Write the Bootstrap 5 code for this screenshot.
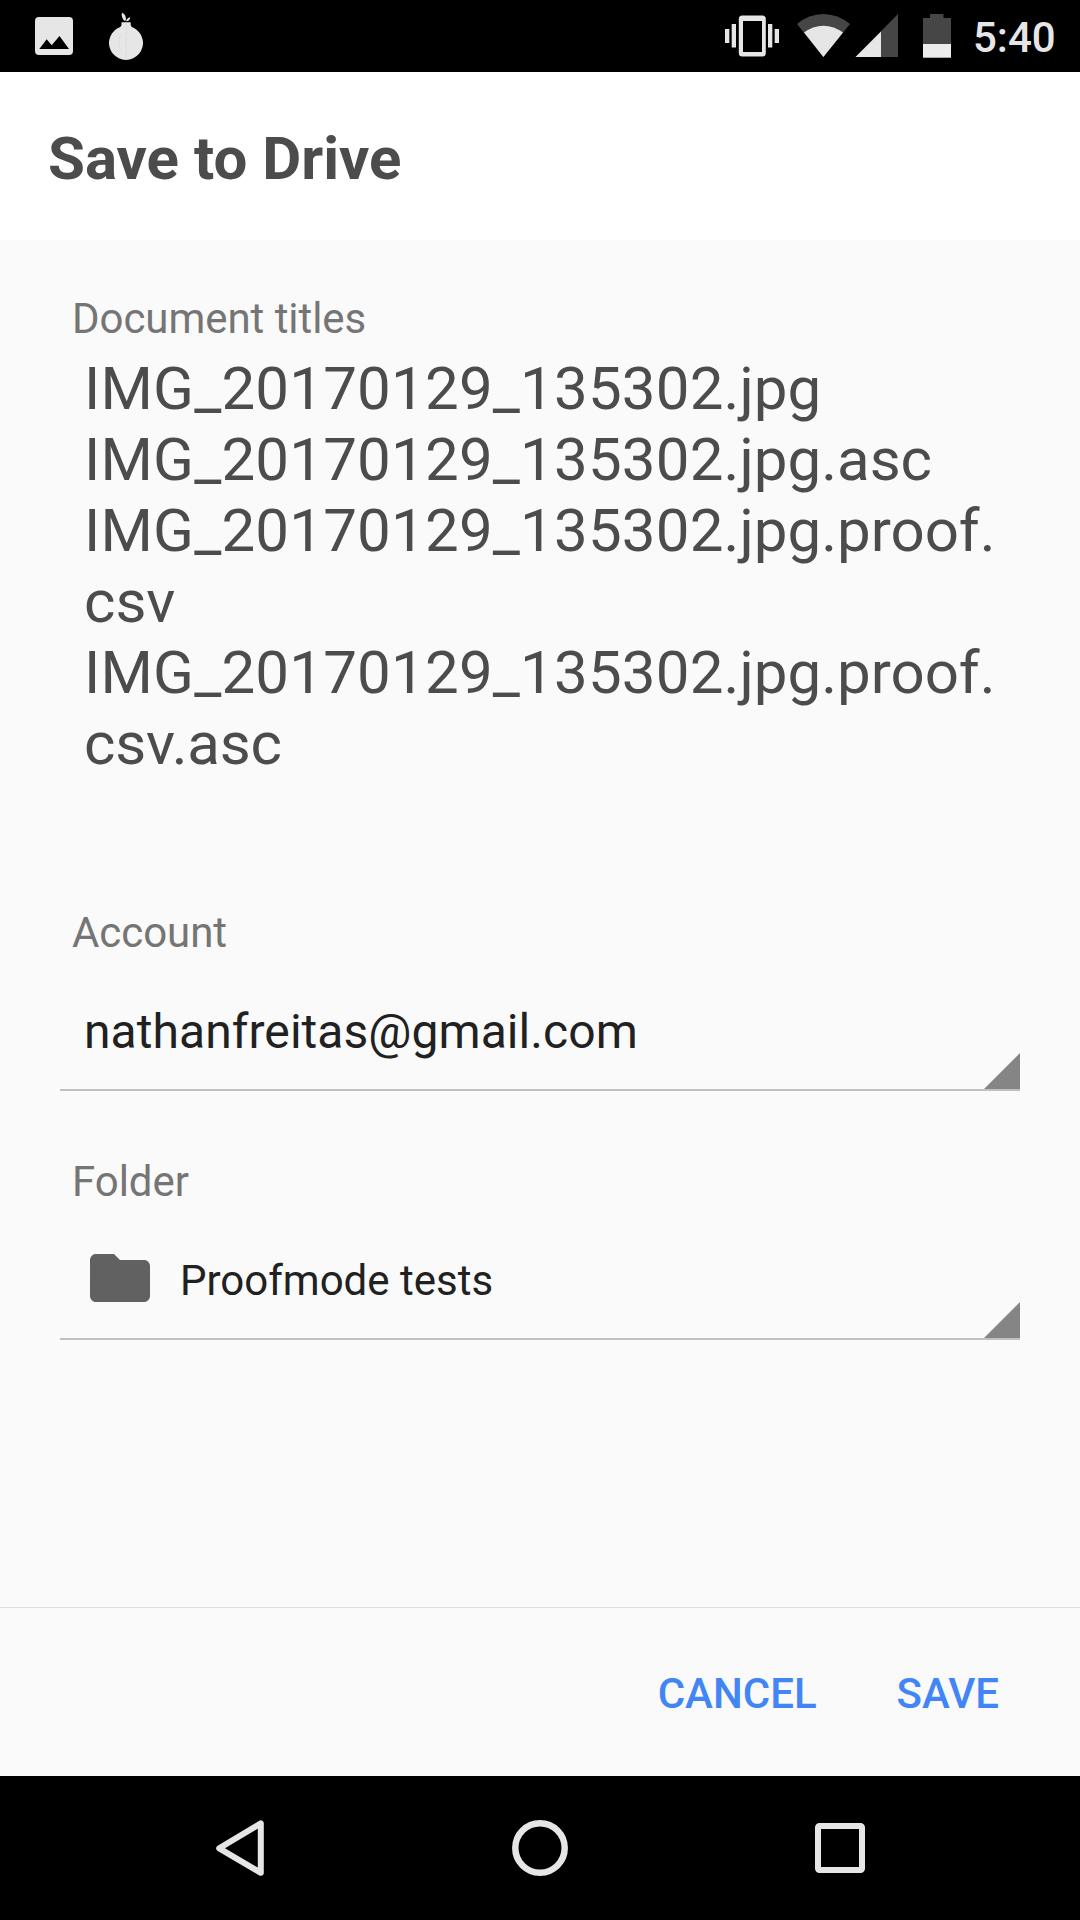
<!DOCTYPE html>
<html lang="en">
<head>
<meta charset="utf-8">
<meta name="viewport" content="width=device-width, initial-scale=1">
<title>Save to Drive</title>
<link href="https://cdn.jsdelivr.net/npm/bootstrap@5.3.0/dist/css/bootstrap.min.css" rel="stylesheet">
<style>
body { font-family: Roboto, "Liberation Sans", sans-serif; background: #fafafa; color: #212121; }
svg { display: block; flex: none; }
.screen { width: 1080px; height: 1920px; }
.status-bar { height: 72px; padding: 0 0 0 35px; background: #000; color: #e6e6e6; }
.status-left { gap: 36px; }
.clock { width: 127px; padding-left: 20px; font-size: 42px; line-height: 50px; font-weight: 500; margin-top: 4px; }
.title-bar { height: 168px; padding: 52px 48px 0; }
.title-bar h1 { font-size: 60px; line-height: 70px; font-weight: 700; color: #4c4c4c; }
.form-area { padding: 54px 60px 0; }
.field-label { font-size: 42px; line-height: 50px; letter-spacing: -.05px; color: #757575; padding-left: 12px; }
.file-names { font-size: 60px; line-height: 71px; color: #4c4c4c; margin: 9px 0 129px; padding-left: 24px; }
.file-stem { letter-spacing: .2px; }
.file-tail { letter-spacing: -.2px; }
.picker { height: 133px; padding: 0 0 0 24px; border: 0; border-bottom: 2px solid #c0c0c0; border-radius: 0; color: #212121; }
.picker-account { font-size: 48px; line-height: 56px; letter-spacing: .06px; margin-bottom: 66px; }
.picker-account > span { padding-top: 46px; }
.picker-folder { font-size: 42px; line-height: 50px; }
.picker-folder > span { padding-top: 49px; }
.picker-folder > .folder-icon { margin: 35px 24px 0 0; }
.actions { height: 169px; padding: 0 51px; gap: 20px; border-top: 1px solid #dedede; }
.actions .btn { --bs-btn-padding-x: 30px; --bs-btn-padding-y: 0; --bs-btn-color: #4285f4; --bs-btn-border-width: 0; font-size: 42px; line-height: 50px; font-weight: 500; margin-top: 61px; }
.nav-keys { height: 144px; background: #000; }
</style>
</head>
<body>
<div class="screen d-flex flex-column overflow-hidden">
  <header class="status-bar d-flex justify-content-between align-items-center">
    <div class="status-left d-flex">
      <svg width="38" height="72" viewBox="35 0 38 72"><rect x="35" y="17" width="38" height="38" rx="4" fill="#e6e6e6"/><path d="M39.3 49 46.7 39.3 51.7 45.3 59.5 36 69 49Z"/></svg>
      <svg width="34" height="72" viewBox="109 0 34 72"><g fill="#e6e6e6"><path d="M121.5 22.2H130.7V24.500Q130.700 27 134.500 28.200A17 17 0 1 1 117.500 28.200Q121.500 27 121.500 24.500Z"/><path d="M122 12.500Q127.500 15.500 125.300 21.300Q120.500 18 122 12.500Z"/><path d="M130.200 17.200Q130 21.300 126.200 21.300Q126.500 18 130.200 17.200Z"/></g><path d="M126.200 22.500V59M121 34Q117 42.500 121 51" fill="none" stroke="#d9d9d9" stroke-width=".6"/></svg>
    </div>
    <div class="d-flex align-items-center">
      <svg width="228" height="72" viewBox="725 0 228 72"><g fill="#e6e6e6"><path d="M725 29h4.300v14H725ZM731.700 24H736v23.500h-4.300ZM768 24h4.300v23.500H768ZM774.700 29h4.300v14h-4.300Z"/><path fill-rule="evenodd" d="M742.300 15.500h20a3.500 3.500 0 0 1 3.500 3.500v34a3.500 3.500 0 0 1-3.500 3.500h-20a3.500 3.500 0 0 1-3.500-3.500V19a3.500 3.500 0 0 1 3.500-3.500ZM743 21v31h19V21Z"/></g>
      <path fill="#464646" d="M823.400 57 797 24Q809 14 823.400 14T850 24Z"/><path fill="#e6e6e6" d="M823.400 57 804 32.600Q813 25.700 823.400 25.700T843 32.600Z"/>
      <path fill="#464646" d="M855.500 57H898V14Z"/><path fill="#e6e6e6" d="M855.500 57H881V31.500Z"/>
      <path fill="#464646" d="M923 18h7v-4h13.500v4h7.500v27h-28Z"/><path fill="#ececec" d="M923 44h28v13.700h-28Z"/></svg>
      <div class="clock">5:40</div>
    </div>
  </header>

  <div class="title-bar bg-white"><h1 class="m-0">Save to Drive</h1></div>

  <main class="form-area flex-grow-1">
    <div class="field-label">Document titles</div>
    <div class="file-names">
      <div><span class="file-stem">IMG_20170129_135302</span>.jpg</div>
      <div><span class="file-stem">IMG_20170129_135302</span>.jpg.asc</div>
      <div><span class="file-stem">IMG_20170129_135302</span>.jpg.proof.<br>csv</div>
      <div><span class="file-stem">IMG_20170129_135302</span>.jpg.proof.<br><span class="file-tail">csv.asc</span></div>
    </div>
    <div class="field-label">Account</div>
    <div class="picker picker-account d-flex justify-content-between align-items-start">
      <span>nathanfreitas@gmail.com</span>
      <svg class="align-self-end" width="36" height="36" viewBox="0 0 36 36"><path fill="#858585" d="M36 0V36H0Z"/></svg>
    </div>
    <div class="field-label">Folder</div>
    <div class="picker picker-folder d-flex align-items-start">
      <svg class="folder-icon" width="72" height="72" viewBox="0 0 24 24"><path fill="#616161" d="M10 4H4c-1.100 0-1.990.900-1.990 2L2 18c0 1.100.900 2 2 2h16c1.100 0 2-.900 2-2V8c0-1.100-.900-2-2-2h-8l-2-2z"/></svg>
      <span>Proofmode tests</span>
      <svg class="align-self-end ms-auto" width="36" height="36" viewBox="0 0 36 36"><path fill="#858585" d="M36 0V36H0Z"/></svg>
    </div>
  </main>

  <footer class="actions d-flex justify-content-end align-items-start">
    <button type="button" class="btn">CANCEL</button>
    <button type="button" class="btn">SAVE</button>
  </footer>

  <nav class="nav-keys d-flex">
    <svg width="1080" height="144" viewBox="0 1776 1080 144" fill="none" stroke="#e6e6e6" stroke-width="6"><path stroke-linejoin="round" d="M219.200 1848.300 260.800 1823.300V1872.800Z"/><circle cx="540" cy="1848" r="24.700" stroke-width="6.500"/><rect x="818" y="1826" width="44" height="44" rx="1.500"/></svg>
  </nav>
</div>
<script src="https://cdn.jsdelivr.net/npm/bootstrap@5.3.0/dist/js/bootstrap.bundle.min.js"></script>
</body>
</html>
